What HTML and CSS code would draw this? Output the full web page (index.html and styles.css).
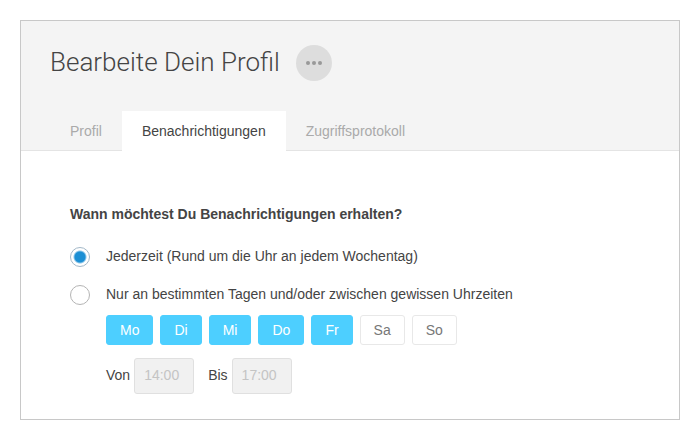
FILE: index.html
```html
<!DOCTYPE html>
<html lang="de">
<head>
    <meta charset="UTF-8">
    <meta name="viewport" content="width=device-width, initial-scale=1.0">
    <title>Bearbeite Dein Profil</title>
    <link rel="stylesheet" href="styles.css">
</head>
<body>
    <main class="panel">
        <header class="panel-header">
            <div class="title-row">
                <h1>Bearbeite Dein Profil</h1>
                <button class="more-btn" type="button" aria-label="Mehr">
                    <svg width="16" height="4" viewBox="0 0 16 4" fill="#999">
                        <circle cx="2" cy="2" r="2"/>
                        <circle cx="8" cy="2" r="2"/>
                        <circle cx="14" cy="2" r="2"/>
                    </svg>
                </button>
            </div>
            <nav class="tabs">
                <a class="tab" href="#profil">Profil</a>
                <a class="tab active" href="#benachrichtigungen">Benachrichtigungen</a>
                <a class="tab" href="#protokoll">Zugriffsprotokoll</a>
            </nav>
        </header>

        <form class="settings">
            <h2>Wann möchtest Du Benachrichtigungen erhalten?</h2>
            <div class="option">
                <input type="radio" name="when" id="always" checked>
                <label for="always">Jederzeit (Rund um die Uhr an jedem Wochentag)</label>
            </div>
            <div class="option">
                <input type="radio" name="when" id="custom">
                <label for="custom">Nur an bestimmten Tagen und/oder zwischen gewissen Uhrzeiten</label>
            </div>
            <div class="days">
                <button class="day on" type="button">Mo</button>
                <button class="day on" type="button">Di</button>
                <button class="day on" type="button">Mi</button>
                <button class="day on" type="button">Do</button>
                <button class="day on" type="button">Fr</button>
                <button class="day" type="button">Sa</button>
                <button class="day" type="button">So</button>
            </div>
            <div class="times">
                <div class="time">
                    <label for="from">Von</label>
                    <input type="text" id="from" value="14:00" disabled>
                </div>
                <div class="time">
                    <label for="to">Bis</label>
                    <input type="text" id="to" value="17:00" disabled>
                </div>
            </div>
        </form>
    </main>
</body>
</html>
```
FILE: styles.css
```css
* {
    box-sizing: border-box;
}
body {
    margin: 20px;
    background: #fff;
    color: #444;
    font-family: "Liberation Sans", Arial, sans-serif;
    font-size: 14px;
    line-height: 20px;
}
.panel {
    border: 1px solid #c8c8c8;
}
.panel-header {
    padding-top: 24px;
    background: #f4f4f4;
    border-bottom: 1px solid #e4e4e4;
}
.title-row {
    display: flex;
    align-items: flex-start;
    gap: 16px;
    padding: 0 29px;
}
h1 {
    margin: 0;
    font-family: Roboto, sans-serif;
    font-size: 26px;
    font-weight: 300;
    line-height: 34px;
}
.more-btn {
    display: flex;
    align-items: center;
    justify-content: center;
    width: 36px;
    height: 36px;
    padding: 0;
    border: none;
    border-radius: 50%;
    background: #ddd;
    cursor: pointer;
}
.tabs {
    display: flex;
    margin: 30px 29px -1px;
}
.tab {
    padding: 10px 20px;
    color: #aaa;
    text-decoration: none;
}
.tab.active {
    background: #fff;
    color: #444;
}
.settings {
    padding: 53px 49px 25px;
}
h2 {
    margin: 0 0 23px;
    font-size: 14px;
    line-height: 20px;
}
.option {
    display: flex;
    align-items: flex-start;
    gap: 16px;
    margin-bottom: 18px;
}
.option label {
    line-height: 18px;
}
.option input {
    appearance: none;
    width: 20px;
    height: 20px;
    margin: 0;
    border: 1px solid #b4b4b4;
    border-radius: 50%;
    background: #fff;
}
.option input:checked {
    border-color: #a3b8c8;
    background: radial-gradient(circle, #1c8fd4 5px, #fff 7px);
}
.days {
    display: flex;
    gap: 7px;
    margin: -8px 0 13px 36px;
}
.day {
    height: 30px;
    padding: 0 13px;
    border: 1px solid #e8e8e8;
    border-radius: 3px;
    background: #fff;
    color: #777;
    font: inherit;
    cursor: pointer;
}
.day.on {
    border-color: #4dcfff;
    background: #4dcfff;
    color: #fff;
}
.times {
    display: flex;
    gap: 14px;
    margin-left: 36px;
}
.time {
    display: flex;
    align-items: center;
    gap: 4px;
}
.time label {
    padding-bottom: 2px;
}
.time input {
    width: 60px;
    height: 36px;
    padding: 0 9px 2px;
    border: 1px solid #e0e0e0;
    border-radius: 3px;
    background: #f1f1f1;
    color: #c4c4c4;
    font: inherit;
}
```
